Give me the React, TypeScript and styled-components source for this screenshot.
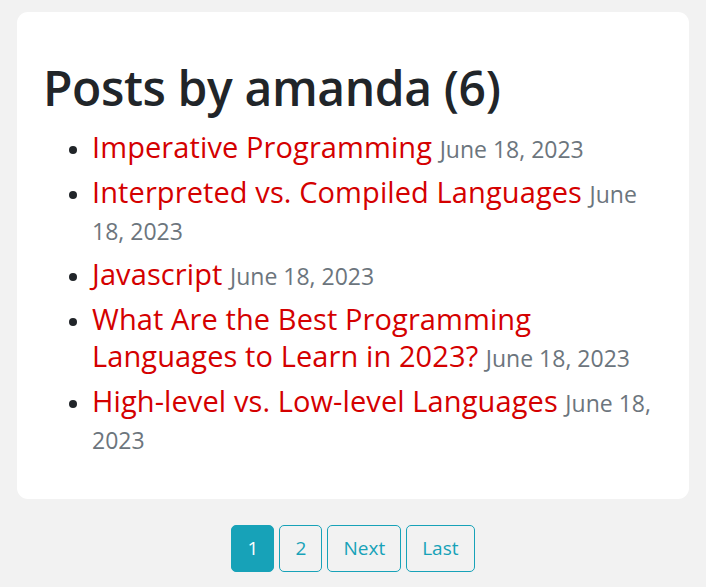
import React from 'react';
import styled, { createGlobalStyle } from 'styled-components';

const GlobalStyle = createGlobalStyle`
    html, body {
        margin: 0;
        padding: 0;
        background: #f2f2f2;
        font-family: 'Open Sans', 'Noto Sans', sans-serif;
    }
`;

const Page = styled.div`
    padding: 12px 17px 15px;
`;

const Card = styled.section`
    background: #fff;
    border-radius: 11px;
    padding: 47px 26px 43px;
`;

const Title = styled.h1`
    margin: 0 0 11px;
    font-size: 48px;
    font-weight: 600;
    line-height: 1.2;
    color: #212529;
    letter-spacing: -0.4px;
`;

const PostList = styled.ul`
    margin: 0;
    padding-left: 49px;
    color: #212529;
`;

const PostItem = styled.li`
    font-size: 29px;
    line-height: 37px;
    margin-bottom: 8px;

    &::marker {
        font-size: 22px;
    }

    &:last-child {
        margin-bottom: 0;
    }
`;

const PostLink = styled.a`
    color: #d40000;
    text-decoration: none;
    letter-spacing: 0.1px;
`;

const PostDate = styled.span`
    font-size: 23px;
    line-height: 1;
    color: #6c757d;
`;

const Pagination = styled.nav`
    display: flex;
    justify-content: center;
    gap: 5px;
    margin-top: 26px;
`;

const PageButton = styled.a<{ $active?: boolean }>`
    display: flex;
    align-items: center;
    justify-content: center;
    min-width: 43px;
    height: 47px;
    padding: 0 ${({ $active }) => ($active ? '0' : '15px')};
    box-sizing: border-box;
    border: 1px solid #17a2b8;
    border-radius: 5px;
    font-size: 19px;
    color: ${({ $active }) => ($active ? '#fff' : '#17a2b8')};
    background: ${({ $active }) => ($active ? '#17a2b8' : 'transparent')};
    text-decoration: none;
`;

const posts = [
    'Imperative Programming',
    'Interpreted vs. Compiled Languages',
    'Javascript',
    'What Are the Best Programming Languages to Learn in 2023?',
    'High-level vs. Low-level Languages',
];

const App = (): JSX.Element => (
    <Page>
        <GlobalStyle />
        <Card>
            <Title>Posts by amanda (6)</Title>
            <PostList>
                {posts.map((title) => (
                    <PostItem key={title}>
                        <PostLink href="#">{title}</PostLink> <PostDate>June 18, 2023</PostDate>
                    </PostItem>
                ))}
            </PostList>
        </Card>
        <Pagination>
            <PageButton $active>1</PageButton>
            <PageButton>2</PageButton>
            <PageButton>Next</PageButton>
            <PageButton>Last</PageButton>
        </Pagination>
    </Page>
);

export default App;
